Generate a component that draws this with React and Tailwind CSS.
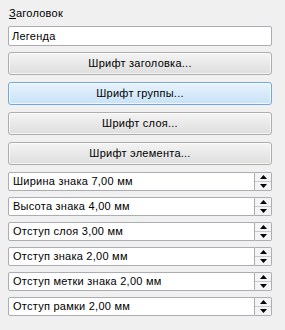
import React from "react";

const font = { fontFamily: '"Liberation Sans", Arial, sans-serif' };

function Btn({ children, active }) {
  return (
    <div
      className={
        "h-[23px] rounded-[3px] border flex items-center justify-center text-[11px] tracking-[0.25px] text-black shadow-[inset_0_0_0_1px_rgba(255,255,255,0.7)] " +
        (active
          ? "border-[#6fa8dc] bg-gradient-to-b from-[#e8f3fc] to-[#c8e2f8]"
          : "border-[#adadad] bg-gradient-to-b from-[#f4f4f4] to-[#dedede]")
      }
    >
      {children}
    </div>
  );
}

function Arrow({ up }) {
  return (
    <svg width="7" height="4" viewBox="0 0 7 4">
      {up ? <polygon points="0,4 7,4 3.5,0" fill="#000" /> : <polygon points="0,0 7,0 3.5,4" fill="#000" />}
    </svg>
  );
}

function Spin({ text }) {
  return (
    <div className="h-[19px] flex">
      <div className="flex-1 bg-white border border-[#abadb3] rounded-l-[2px] flex items-center pl-[4px] text-[11px] tracking-[0.25px] text-black">
        {text}
      </div>
      <div className="w-[17px] border border-l-0 border-[#abadb3] rounded-r-[2px] flex flex-col bg-[#f4f4f4]">
        <div className="flex-1 flex items-center justify-center border-b border-[#c9c9c9]">
          <Arrow up />
        </div>
        <div className="flex-1 flex items-center justify-center">
          <Arrow />
        </div>
      </div>
    </div>
  );
}

export default function App() {
  return (
    <div className="w-[285px] h-[330px] bg-[#f0f0f0] pl-[8px] pr-[13px] pt-[6px]" style={font}>
      <div className="h-[14px] leading-[14px] text-[11px] tracking-[0.25px] text-black pl-[1px]">
        <span className="underline">З</span>аголовок
      </div>
      <div className="mt-[6px] h-[20px] bg-white border border-[#abadb3] rounded-[2px] flex items-center pl-[3px] text-[11px] tracking-[0.25px] text-black">
        Легенда
      </div>
      <div className="mt-[6px] flex flex-col gap-[7px]">
        <Btn>Шрифт заголовка...</Btn>
        <Btn active>Шрифт группы...</Btn>
        <Btn>Шрифт слоя...</Btn>
        <Btn>Шрифт элемента...</Btn>
      </div>
      <div className="mt-[7px] flex flex-col gap-[6px]">
        <Spin text="Ширина знака 7,00 мм" />
        <Spin text="Высота знака 4,00 мм" />
        <Spin text="Отступ слоя 3,00 мм" />
        <Spin text="Отступ знака 2,00 мм" />
        <Spin text="Отступ метки знака 2,00 мм" />
        <Spin text="Отступ рамки 2,00 мм" />
      </div>
    </div>
  );
}
